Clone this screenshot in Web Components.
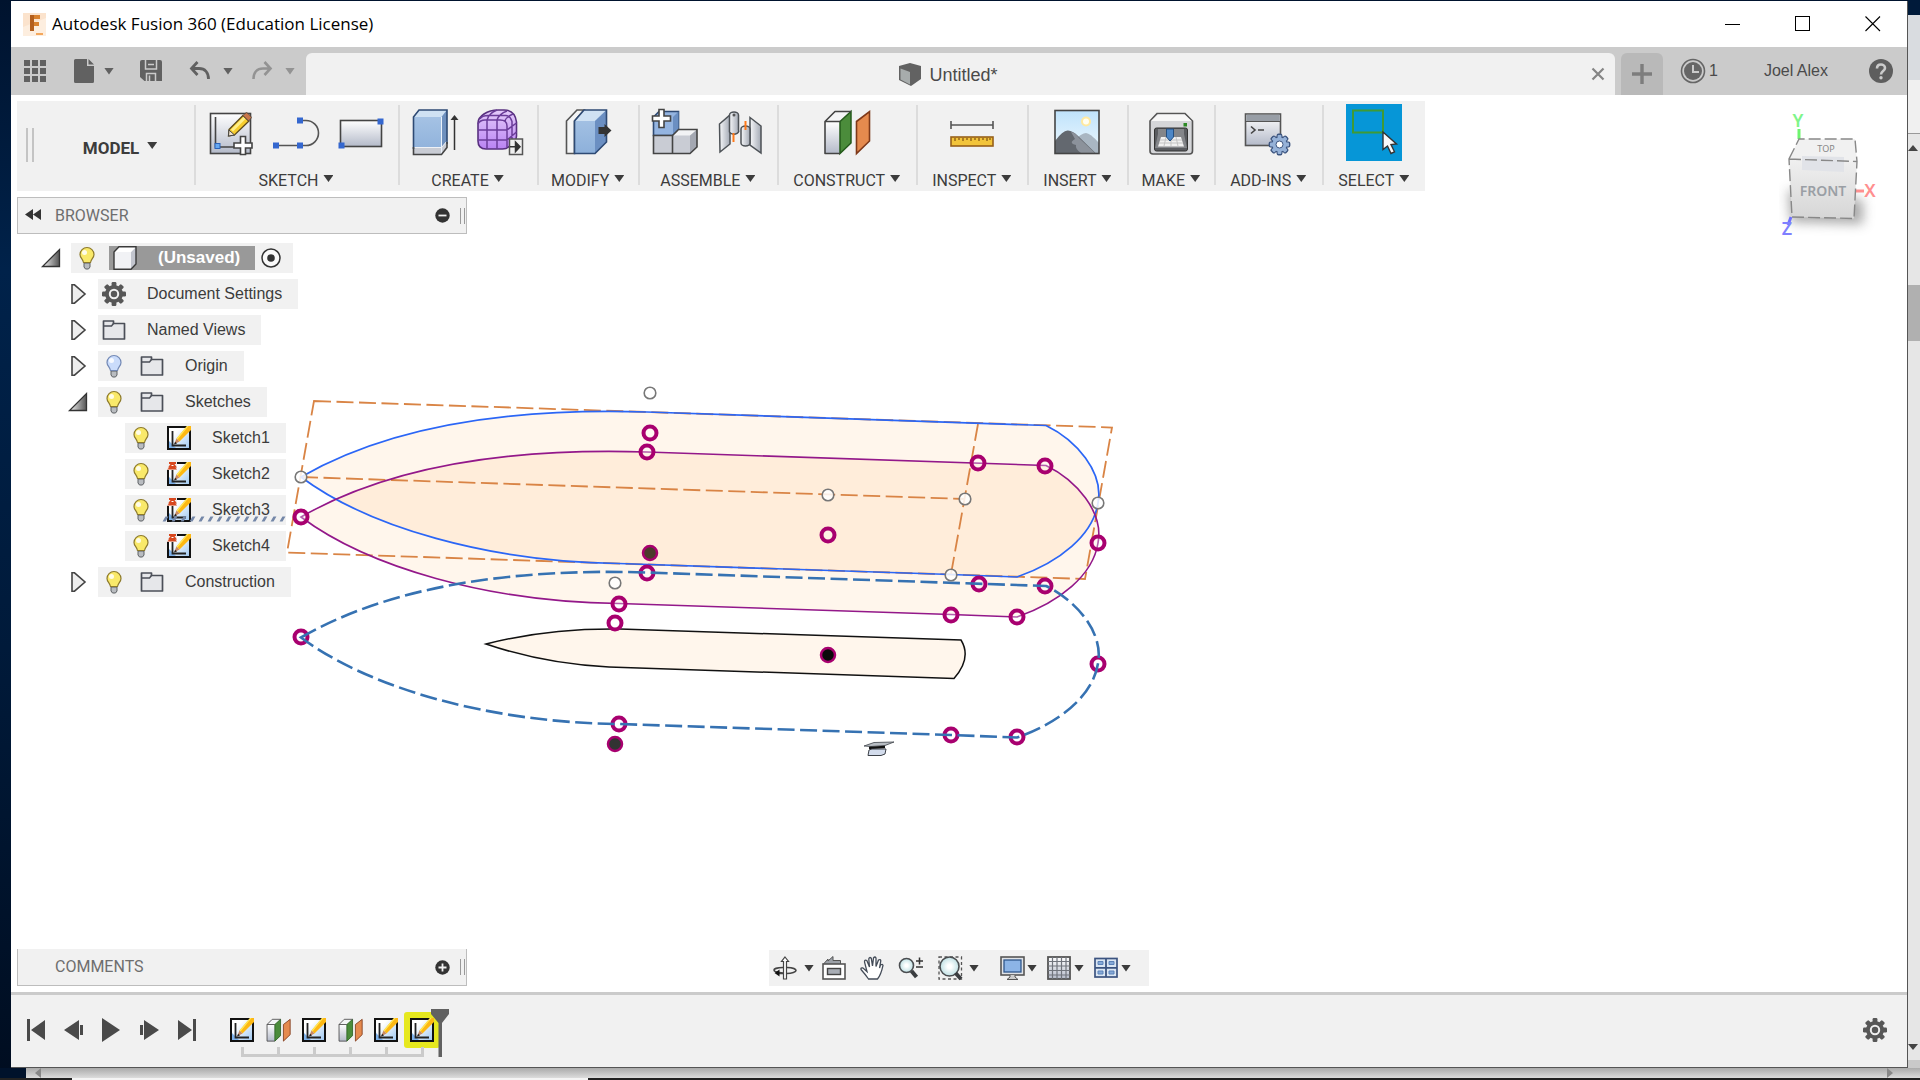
<!DOCTYPE html>
<html lang="en">
<head>
<meta charset="utf-8">
<title>Autodesk Fusion 360 (Education License)</title>
<style>
  html, body {
    margin: 0;
    height: 100%;
  }
  body {
    overflow: hidden;
    color: #3c3c3c;
    font: 16px/20px "Liberation Sans", Arial, sans-serif;
  }
</style>
</head>
<body>
<fusion-app></fusion-app>

<script>
// shared by every shadow root, since outside rules don't reach in
const reset = `
*, *::before, *::after { box-sizing: border-box; }
button {
  all: unset;
  box-sizing: border-box;
  display: inline-flex;
  align-items: center;
  cursor: default;
}
button:focus-visible { outline: 1px dotted #0696d7; }
`;

/**
 * Registers an element from its styles and markup
 * @param {string} name
 * @param {string} style
 * @param {string} markup
 */
function define(name, style, markup) {
  const tmpl = document.createElement("template");
  tmpl.innerHTML = `<style>${reset}${style}</style>${markup}`;
  customElements.define(name, class extends HTMLElement {
    constructor() {
      super();
      this.attachShadow({ mode: "open" }).appendChild(tmpl.content.cloneNode(true));
    }
  });
}

/* ---------- icons ---------- */

const gradients = `
<defs>
  <linearGradient id="paper" x2="0" y2="1"><stop stop-color="#fff"/><stop offset="1" stop-color="#b4bac9"/></linearGradient>
  <linearGradient id="blue" x2="0" y2="1"><stop stop-color="#a9c5e6"/><stop offset="1" stop-color="#8db0da"/></linearGradient>
  <linearGradient id="sky" x2="0" y2="1"><stop stop-color="#bfe2fb"/><stop offset="1" stop-color="#eef9fe"/></linearGradient>
  <linearGradient id="violet" x2="0" y2="1"><stop stop-color="#e4cbfa"/><stop offset="1" stop-color="#b983f3"/></linearGradient>
  <linearGradient id="wash" x2="1" y2="1"><stop offset=".3" stop-color="#fff"/><stop offset="1" stop-color="#9cc7f2"/></linearGradient>
  <linearGradient id="steel"><stop stop-color="#f7f8fa"/><stop offset="1" stop-color="#a3a9b4"/></linearGradient>
  <linearGradient id="dusk"><stop stop-color="#f5f5f5"/><stop offset="1" stop-color="#555"/></linearGradient>
  <radialGradient id="lens"><stop offset=".2" stop-color="#fff"/><stop offset="1" stop-color="#bfe0e4"/></radialGradient>
</defs>`;

function gear(cx, cy, r, fill, extra = "") {
  let teeth = "";
  for (let a = 0; a < 360; a += 45) {
    teeth += `<rect x="${cx - r * 0.2}" y="${cy - r}" width="${r * 0.4}" height="${r * 0.5}" rx="${r * 0.1}" transform="rotate(${a} ${cx} ${cy})"/>`;
  }
  return `<g fill="${fill}" ${extra}>${teeth}<circle cx="${cx}" cy="${cy}" r="${r * 0.75}"/></g>`;
}

const plus = (x, y) => `<path d="M${x - 2.5} ${y - 9}h5v6.5h6.5v5h-6.5v6.5h-5v-6.5h-6.5v-5h6.5z" fill="#fff" stroke="#444" stroke-width="1.6"/>`;
const dot = (x, y) => `<rect x="${x - 3}" y="${y - 3}" width="6" height="6" fill="#3467cf"/>`;
const bulb = (glass, rim) => `
  <path d="M9 17h6v4l-1.500 2h-3l-1.500-2z" fill="#b9bcc0" stroke="#5d6064"/>
  <path d="M12 1.500a7 7 0 0 1 7 7c0 3.500-3 4.500-3.500 8h-7c-.5-3.500-3.500-4.500-3.500-8a7 7 0 0 1 7-7z" fill="${glass}" stroke="${rim}" stroke-width="1.200"/>
  <circle cx="9.500" cy="6.500" r="2.500" fill="#fff" opacity=".85"/>`;
const sketch = `
  <rect x="1" y="1" width="22" height="22" fill="url(#wash)"/>
  <path d="M1 23L1 14 10 23z" fill="#7fb2ea"/><rect x="1" y="1" width="22" height="22" fill="none" stroke="#111" stroke-width="2"/>
  <path d="M5.500 5v14.500H19" fill="none" stroke="#222" stroke-width="1.800"/>
  <path d="M9.500 12.500L20 0h4v4L12.500 15.500z" fill="#fdb813"/><path d="M20 0l1.500 0L10.500 13.500 9.500 12.500z" fill="#ffe85a"/>
  <path d="M9.500 12.500l3 3-5.500 3z" fill="#c98a62"/><path d="M7 18.500l1.200-2.700 1.800 1.600z" fill="#222"/>`;
const planes = `
  <path d="M2 12.500L12 2.500H28L17 12.500z" fill="#f4f5f6"/><path d="M2 12.500h15v32H2z" fill="url(#paper)"/>
  <path d="M17 12.500L28 2.500V34L17 44.500z" fill="#4b8c3b" stroke="#245a1b" stroke-width="1.500"/>
  <path d="M17 44.500H2v-32L12 2.500H28M2 12.500H17" fill="none" stroke="#444" stroke-width="1.600" stroke-linejoin="round"/>
  <path d="M33.500 12.500L46.500 2.500V32L33.500 44.500z" fill="#e58a4e" stroke="#7e391a" stroke-width="1.600"/>`;

// name: [width, height, shapes]
const icons = {
  logo: [23, 23, `<rect width="23" height="23" fill="#fbe3cd"/><path d="M0 14L23 5v18H0z" fill="#fdeedf"/>
    <path d="M7 18V2h10v4h-6v3h5v4h-5v5z" fill="#d9822f"/><path d="M7 2h4v16H7z" fill="#b45f1d"/><path d="M13 20h7v2h-7z" fill="#f3a75c"/>`],
  minimize: [16, 16, `<path d="M0 8.500h15" stroke="#000"/>`],
  maximize: [16, 16, `<rect x=".5" y=".5" width="14" height="14" fill="none" stroke="#000"/>`],
  close: [16, 16, `<path d="M.5 .5l14.500 14.500M15 .5L.5 15" stroke="#000" stroke-width="1.100"/>`],
  apps: [24, 24, `<path fill="#616161" d="M1 1h6v6H1zM9 1h6v6H9zM17 1h6v6h-6zM1 9h6v6H1zM9 9h6v6H9zM17 9h6v6h-6zM1 17h6v6H1zM9 17h6v6H9zM17 17h6v6h-6z"/>`],
  file: [24, 24, `<path fill="#616161" d="M3.500 0H15v7h7v15.500a1.500 1.500 0 0 1-1.500 1.500h-17A1.500 1.500 0 0 1 2 22.500v-21A1.500 1.500 0 0 1 3.500 0zM16.500 0L22 5.500h-5.500z"/>`],
  save: [24, 24, `<path fill="#616161" d="M3 1h18a2 2 0 0 1 2 2v19H5.500L1 18V3a2 2 0 0 1 2-2z"/><path d="M6.500 1v9h11V1M7.500 22v-7.500h9V22" fill="none" stroke="#cbcbcb" stroke-width="1.500"/><path d="M10.500 16.500v5.500M9 5.500h6" stroke="#cbcbcb" stroke-width="1.500"/>`],
  undo: [24, 24, `<path d="M9.500 3L3.500 9.500l6 6.500M4 9.500h7c6 0 9.500 4 9.500 10.500" fill="none" stroke="#616161" stroke-width="2.800"/>`],
  redo: [24, 24, `<path d="M14.500 3l6 6.500-6 6.500M20 9.500h-7c-6 0-9.500 4-9.500 10.500" fill="none" stroke="#939393" stroke-width="2.600"/>`],
  cube: [24, 24, `<path d="M1 3L12 0l11 3v13L13 23 1 17z" fill="#626262"/><path d="M2.500 5.500L12 9v12.500L2.500 16.500z" fill="#a7acac"/>`],
  tabclose: [14, 14, `<path d="M1.500 1.500l11 11M12.500 1.500l-11 11" stroke="#858585" stroke-width="2.200"/>`],
  add: [20, 20, `<path d="M10 0v20M0 10h20" stroke="#7d7d7d" stroke-width="3.400"/>`],
  clock: [26, 26, `<circle cx="13" cy="13" r="11.500" fill="none" stroke="#666" stroke-width="1.600"/><circle cx="13" cy="13" r="9" fill="#666"/><path d="M13 7v7h6" fill="none" stroke="#cbcbcb" stroke-width="2"/>`],
  help: [24, 24, `<circle cx="12" cy="12" r="12" fill="#5e5e5e"/><path d="M8 9.500c0-5.500 8-5 8-.5 0 3-4 3-4 6.500" fill="none" stroke="#cbcbcb" stroke-width="2.600"/><circle cx="12" cy="18.800" r="1.700" fill="#cbcbcb"/>`],

  "new-sketch": [48, 48, `<rect x="3.500" y="4.500" width="40" height="40" fill="url(#paper)" stroke="#444" stroke-width="1.600"/><path d="M8.500 8v30H32" fill="none" stroke="#444" stroke-width="1.600"/>
    <rect x="8" y="34.500" width="5" height="5" fill="#66a8f0" stroke="#2a62b8"/>
    <path d="M22 20.500L36 6.500l6 5.500L27.500 26l-6 1z" fill="#f6cd2e" stroke="#5b4a1e" stroke-width="1.300"/><path d="M24 20.500L36.500 8l2 2L26 22.500z" fill="#fff08a"/>
    <path d="M36 6.500l2-2a2 2 0 0 1 3 0l2.500 2.500a2 2 0 0 1 0 3l-2 2z" fill="#c9764a" stroke="#5b4a3e"/><path d="M21.500 27l.5-6 5.500 5z" fill="#f3e3c8" stroke="#444"/>${plus(36, 36.5)}`],
  line: [48, 48, `<path d="M4 36.500H34a12.500 12.500 0 0 0 0-25H28" fill="none" stroke="#555" stroke-width="1.600"/>${dot(4, 36.5)}${dot(28, 36.5)}${dot(28, 11.5)}`],
  rect: [48, 48, `<rect x="3.500" y="11.500" width="41" height="26" fill="url(#paper)" stroke="#444" stroke-width="1.600"/>${dot(43.5, 12.5)}${dot(4.5, 36.5)}`],
  extrude: [48, 48, `<path d="M2.500 8L8 1H36V38L30.500 45.500h-28z" fill="url(#blue)"/><path d="M2.500 8L8 1H36L30.500 8z" fill="#cfe1f3"/><path d="M30.500 8L36 1V33l-5.500 6z" fill="#6e90be"/>
    <path d="M2.500 38.500h28L36 32v6.500l-5.500 7h-28z" fill="#c9ccd4"/><path d="M2.500 38.500h28L36 32" fill="none" stroke="#eef1f6"/><path d="M30.500 8v37" stroke="#eaf1fa"/>
    <path d="M2.500 40V8L8 1H36V35" fill="none" stroke="#2e4a74" stroke-width="1.600"/><path d="M2.500 38v7.500h28L36 38.500V33" fill="none" stroke="#444" stroke-width="1.600"/>
    <path d="M43.500 41V9" stroke="#333" stroke-width="1.500"/><path d="M39.500 11l4-5 4 5z" fill="#333"/>`],
  form: [48, 48, `<path d="M2 14Q2 9 8 5 14 1 22 1h6q11 0 12.500 12V27q0 6-8 11-2 2-6 2H10q-8 0-8-8z" fill="url(#violet)" stroke="#58307f" stroke-width="1.600"/>
    <path d="M2 15Q4 11 9 11H24q7 0 7 6V38M2 21H31L40.500 14M2 31H31L40.500 23M11 11V40M21 11V40M4 10Q6 6.500 12 6.500H30q4 0 6 6V34M11 11Q13 4 21 1M21 11Q23 5 31 2M29 12Q30 8 37 5" fill="none" stroke="#6b3d99" stroke-width="1.500"/>
    <rect x="33.500" y="30" width="13" height="15.500" fill="#f0f0f0" stroke="#555" stroke-width="1.500"/><path d="M34 37.700h5M39.500 33l4.500 4.700-4.500 4.800z" fill="#333" stroke="#333" stroke-width="1.500"/>`],
  modify: [48, 48, `<path d="M2.500 12L13 1h7L10.500 12v32.500h-8z" fill="#f4f5f6" stroke="#555" stroke-width="1.600"/><path d="M10.500 12L20 1H42.500V33L31 44.500H10.500z" fill="url(#blue)"/>
    <path d="M10.500 12L20 1H42.500L31 12z" fill="#cfe1f3"/><path d="M31 12L42.500 1V33L31 44.500z" fill="#6b8fc2"/><path d="M10.500 12L20 1H42.500V33L31 44.500H10.500z" fill="none" stroke="#2e4a74" stroke-width="1.600"/>
    <path d="M34.500 18h6v-3l7 6.500-7 6.500v-3h-6z" fill="#333"/>`],
  component: [48, 48, `<path d="M2.500 8L8 2.500H27.500V21l-6 5.500h-19z" fill="#94b4e0" stroke="#2e4a74" stroke-width="1.600"/><path d="M22 8L27.500 2.500V21L22 26z" fill="#6b8fc2"/>
    <path d="M2.500 26.500h19v18h-19z" fill="#c9ccd4"/><path d="M21.500 26.500L27.500 20.500H46L39 26.500z" fill="#f2f3f5"/><path d="M21.500 26.500H39v18H21.500z" fill="#c9ccd4"/><path d="M39 26.500L46 20.500V38l-7 6.500z" fill="#a4a8b2"/>
    <path d="M2.500 26.500h19v18h-19zM21.500 26.500L27.500 20.500H46V38l-7 6.500H21.500z" fill="none" stroke="#444" stroke-width="1.600"/>${plus(10.5, 9.5)}`],
  joint: [48, 48, `<path d="M3.500 15L14 6v29L4 43z" fill="url(#steel)" stroke="#4d5257" stroke-width="1.500"/><path d="M13.500 6a4.500 3 0 0 1 9 0V21a4.500 3 0 0 1-9 2z" fill="url(#steel)" stroke="#4d5257" stroke-width="1.500"/><circle cx="18" cy="6" r="1.500" fill="#555"/>
    <path d="M34 8.500L45 17v27L34 36z" fill="url(#steel)" stroke="#4d5257" stroke-width="1.500"/><path d="M25 20a4.500 3 0 0 1 9 0V34a4.500 3 0 0 1-9 0z" fill="url(#steel)" stroke="#4d5257" stroke-width="1.500"/>
    <path d="M17.500 24v9M29.500 12v9" stroke="#ff7a1a" stroke-width="2"/>`],
  construct: [48, 48, planes],
  inspect: [48, 48, `<path d="M3 16H45M3 12v8M45 12v8" stroke="#555" stroke-width="1.600"/><rect x="3" y="28" width="42" height="9" fill="#f2c43a" stroke="#96601a" stroke-width="1.600"/>
    <path d="M7 29v3M11 29v2M15 29v3M19 29v2M23 29v3M27 29v2M31 29v3M35 29v2M39 29v3M42 29v2" stroke="#7d4f12" stroke-width="1.200"/>`],
  insert: [48, 48, `<rect x="2" y="1.500" width="44" height="43" fill="url(#sky)"/><circle cx="33" cy="12.500" r="5" fill="#ffe9a0"/><circle cx="33" cy="12.500" r="3" fill="#fffef2"/>
    <path d="M20 32Q29 24 33 24t13 10v10H20z" fill="#a9b6c2"/><path d="M2 32Q10 21 15 21.500T24 26L43 44.500H2z" fill="#63686f"/><path d="M18 23q4 0 8 6L42 44H28q-6-4-5-8-8-2-1-6z" fill="#8c929b"/>
    <rect x="2" y="1.500" width="44" height="43" fill="none" stroke="#444" stroke-width="1.600"/>`],
  make: [48, 48, `<path d="M3 12L10 4.500H38L45.500 12V42a3 3 0 0 1-3 3H6a3 3 0 0 1-3-3z" fill="#d5d6d9" stroke="#555" stroke-width="1.600"/><path d="M4 12l7-6.500H37.500L44.500 12z" fill="#f7f7f7"/>
    <rect x="36.500" y="14" width="3.500" height="3.500" fill="#2c8a24"/><rect x="7.500" y="19" width="33" height="23" rx="2" fill="#5a5c60" stroke="#333"/><path d="M11 20h26v5l3 14H8l3-14z" fill="#84868a"/><path d="M14 28H34l3 9.500H11z" fill="#f1f1f1"/><path d="M13 31H35M12 34H36M19 28l-2 9M24 28v9M29 28l2 9" stroke="#c3c3c3"/>
    <path d="M19.500 20h7v8l-3.500 4-3.500-4z" fill="#4c86c6" stroke="#244f80"/>`],
  addins: [48, 48, `<rect x="1.500" y="5" width="35" height="31.500" fill="url(#paper)" stroke="#555" stroke-width="1.600"/><path d="M2.300 5.800H35.700V12H2.300z" fill="#989ea6"/><path d="M1.500 12.500h35" stroke="#555"/><path d="M7 17.500l4 3.500-4 3.500M14 21h6" fill="none" stroke="#444" stroke-width="1.600"/>
    ${gear(35.5, 35.5, 10, "#96b2d8", 'stroke="#3e5680" stroke-width="1.800"')}${gear(35.5, 35.5, 9.5, "#96b2d8")}<circle cx="35.500" cy="35.500" r="3.500" fill="#fff" stroke="#3e5680"/>`],
  select: [48, 48, `<rect x="3" y="1.500" width="30" height="22" fill="none" stroke="#3f9a35" stroke-width="2"/><path d="M33 23l0 17.500 4.500-3.500 3.500 7.500 3.500-1.700-3.500-7.300 5.500-.5z" fill="#fafafa" stroke="#333" stroke-width="1.400"/>`],

  rewind: [16, 12, `<path d="M8 0v11L0 5.500zM16 0v11L8 5.500z" fill="#333"/>`],
  minus: [15, 15, `<circle cx="7.500" cy="7.500" r="7.200" fill="#333"/><path d="M3.500 7.500h8" stroke="#f0f0f0" stroke-width="1.800"/>`],
  plus: [15, 15, `<circle cx="7.500" cy="7.500" r="7.200" fill="#333"/><path d="M3.500 7.500h8M7.500 3.500v8" stroke="#f0f0f0" stroke-width="1.800"/>`],
  open: [20, 20, `<path d="M1.500 18.500h17V1.500z" fill="url(#dusk)" stroke="#333" stroke-width="1.300"/>`],
  shut: [20, 20, `<path d="M4 .8h2.500L17 10 6.500 19.200H4z" fill="#eee" stroke="#444" stroke-width="1.600"/>`],
  bulb: [24, 24, bulb("#f9e96a", "#8d7a2c")],
  "bulb-off": [24, 24, bulb("#cadcfb", "#7389b5")],
  body: [24, 24, `<path d="M1 6L6 .8H23V18l-5 5.200H1z" fill="#f1f2f5"/><path d="M18 6L23 1V18l-5 5z" fill="#c2c5ce"/><path d="M1 6L6 .8H23L18 6z" fill="#fff"/><path d="M1 6L6 .8H23V18l-5 5.200H1z" fill="none" stroke="#3a3a3a" stroke-width="1.400"/>`],
  folder: [24, 24, `<path d="M1.500 3h10v2.500h11V21h-21z" fill="#e6e7ea" stroke="#4b4f58" stroke-width="1.700" stroke-linejoin="round"/><path d="M1.500 8H9.500l2-2.500" fill="none" stroke="#4b4f58" stroke-width="1.500"/>`],
  target: [20, 20, `<circle cx="10" cy="10" r="9" fill="#fafafa" stroke="#333" stroke-width="1.500"/><circle cx="10" cy="10" r="3.800" fill="#333"/>`],
  gear: [24, 24, `${gear(12, 12, 12, "#575757")}<circle cx="12" cy="12" r="4.200" fill="none" stroke="#f0f0f0" stroke-width="2"/>`],
  sketch: [24, 24, sketch],
  "sketch-pin": [24, 24, `${sketch}<path d="M0 0h10v8H0z" fill="#f0f0f0"/><path d="M2 0h7v2H7.500l2.500 3.500H1L3.500 2H2zM0 7.500L3 5h5l2 2.500z" fill="#d8481f"/><path d="M4.500 3.500h2" stroke="#fff"/>`],
  planes: [24, 24, `<g transform="scale(.52)">${planes}</g>`],

  orbit: [24, 24, `<path d="M14 11.500c5.500 0 9 1.500 9 3s-4 3-9 3H5M10 17C3 16.500 1 15 1 14s3-2.500 9-2.500" fill="none" stroke="#444" stroke-width="1.600"/><path d="M6.500 13.500v7L1.500 17z" fill="#111"/><path d="M12 1l3.500 4.500h-2V23h-3V5.500h-2z" fill="#fff" stroke="#444" stroke-width="1.200"/>`],
  lookat: [24, 24, `<path d="M1.500 8L6 3v2L11 .5V4.500h7.500V8" fill="#9ca1a8" stroke="#555"/><rect x="1" y="8" width="22" height="15" fill="#fff" stroke="#555" stroke-width="1.600"/><rect x="5.500" y="12.500" width="13" height="6" fill="#a8adb5" stroke="#444" stroke-width="1.400"/>`],
  pan: [24, 24, `<path d="M8.500 23Q5 18 1 13.500q-.5-2 2-1.500l4 3.500L4.500 6q0-2.500 2.300-1.500L9.500 11 8.800 3q.7-2.600 2.500-.7L12.500 10l1-8q1.500-2 2.500 0V10.500L18.500 4q2-1.200 2.300.8L19.500 12l1-3q2-1.500 2.500.3C22 14 21 19 17.500 23z" fill="#fff" stroke="#444c58" stroke-width="1.300"/>`],
  zoom: [26, 24, `<circle cx="8.500" cy="9.500" r="7" fill="url(#lens)" stroke="#4a4d50" stroke-width="1.600"/><path d="M13.500 15l5 6" stroke="#3a3d40" stroke-width="4"/><path d="M18 5h7M21.500 1.500v7M18 11h7" stroke="#333" stroke-width="1.500"/>`],
  fit: [24, 24, `<path d="M1 1h22.500v22H1z" fill="none" stroke="#555" stroke-width="1.300" stroke-dasharray="3 2.500"/><circle cx="11.500" cy="10.500" r="9.500" fill="url(#lens)" stroke="#4a4d50" stroke-width="1.600"/><path d="M17.500 17l5.500 6" stroke="#3a3d40" stroke-width="4"/>`],
  display: [24, 24, `<rect x="1" y="1" width="23" height="18" fill="#dfe2e6" stroke="#555" stroke-width="1.600"/><rect x="4" y="4" width="17" height="12" fill="#8cb4e6" stroke="#2f568c" stroke-width="1.300"/><path d="M10 19v2l-3 2.500h11L15 21v-2" fill="#ccc" stroke="#555"/>`],
  grid: [24, 24, `<rect x="1" y="1" width="22" height="22" fill="url(#paper)" stroke="#555" stroke-width="1.800"/><path d="M5.500 1v22M10 1v22M14.500 1v22M19 1v22M1 5.500h22M1 10h22M1 14.500h22M1 19h22" stroke="#70747c" stroke-width="1.200"/>`],
  views: [24, 24, `<rect x="1" y="2.500" width="22" height="18.500" fill="#dbe6f3" stroke="#3c5480" stroke-width="1.700"/><path d="M12 2v19M1 11.800h22" stroke="#3c5480" stroke-width="1.800"/><path d="M4 5.500h5v3H4zM15 5.500h5v3h-5zM4 15h5v3H4zM15 15h5v3h-5z" fill="#86a9d8" stroke="#5d83b8"/>`],

  first: [20, 22, `<path d="M1 0h3v22H1zM19 1v20L5 11z" fill="#4a4a4a"/>`],
  back: [20, 22, `<path d="M15 1v20L0 11zM16 6h3v10h-3z" fill="#4a4a4a"/>`],
  play: [20, 24, `<path d="M0 0l18 12L0 24z" fill="#4a4a4a"/>`],
  forward: [20, 22, `<path d="M4 1v20L19 11zM0 6h3v10H0z" fill="#4a4a4a"/>`],
  last: [20, 22, `<path d="M0 1v20L14 11zM15 0h3v22h-3z" fill="#4a4a4a"/>`],
  marker: [18, 48, `<path d="M0 0h18v5l-7 9v34H7.500V14L0 5z" fill="#616161"/>`],
};

customElements.define("fusion-icon", class extends HTMLElement {
  constructor() {
    super();
    this.attachShadow({ mode: "open" });
  }

  connectedCallback() {
    const [w, h, shapes] = icons[this.getAttribute("name")];
    this.shadowRoot.innerHTML = `
      <style>:host { display: block; flex: none; } svg { display: block; overflow: visible; }</style>
      <svg width="${w}" height="${h}" viewBox="0 0 ${w} ${h}" aria-hidden="true">${gradients}${shapes}</svg>`;
  }
});

define("drop-arrow", `
:host {
  display: block;
  flex: none;
  width: 10px;
  height: 7px;
  background: currentColor;
  clip-path: polygon(0 0, 100% 0, 50% 100%);
}`, ``);

/* ---------- title bar and tabs ---------- */

define("title-bar", `
:host {
  display: flex;
  align-items: center;
  height: 46px;
  padding: 0 26px 0 12px;
  background: #fff;
  color: #000;
}
h1 {
  flex: 1;
  margin: 0 0 0 6px;
  font: 17px/24px "Open Sans", "Noto Sans", sans-serif;
}
div { display: flex; gap: 54px; }
`, `
<fusion-icon name="logo"></fusion-icon>
<h1><slot></slot></h1>
<div>
  <button aria-label="Minimize"><fusion-icon name="minimize"></fusion-icon></button>
  <button aria-label="Maximize"><fusion-icon name="maximize"></fusion-icon></button>
  <button aria-label="Close"><fusion-icon name="close"></fusion-icon></button>
</div>`);

define("quick-bar", `
:host {
  display: flex;
  height: 48px;
  background: #cbcbcb;
  color: #616161;
}
.tools, .account {
  display: flex;
  align-items: center;
}
.tools { gap: 25px; padding: 0 11px 0 12px; }
.tools button { gap: 8px; }
.history { display: flex; gap: 17px; }
.history button { gap: 11px; }
.redo { color: #939393; }
.tab {
  flex: 1;
  display: flex;
  align-items: center;
  margin-top: 6px;
  padding: 0 10px;
  border-radius: 6px 6px 0 0;
  background: #f1f1f1;
  color: #4a4a4a;
}
.name {
  flex: 1;
  display: flex;
  justify-content: center;
  align-items: center;
  gap: 8px;
  padding: 2px 12px 0 0;
  font-size: 18px;
}
.new {
  justify-content: center;
  width: 42px;
  margin: 6px 0 0 6px;
  border-radius: 6px 6px 0 0;
  background: #b9b9b9;
}
.account { padding: 0 14px 0 17px; color: #4a4a4a; }
.jobs { gap: 3px; }
.user { margin: 0 41px 0 46px; }
`, `
<div class="tools">
  <button aria-label="Data panel"><fusion-icon name="apps"></fusion-icon></button>
  <button aria-label="File"><fusion-icon name="file"></fusion-icon><drop-arrow></drop-arrow></button>
  <button aria-label="Save"><fusion-icon name="save"></fusion-icon></button>
  <div class="history">
    <button aria-label="Undo"><fusion-icon name="undo"></fusion-icon><drop-arrow></drop-arrow></button>
    <button class="redo" aria-label="Redo"><fusion-icon name="redo"></fusion-icon><drop-arrow></drop-arrow></button>
  </div>
</div>
<div class="tab">
  <span class="name"><fusion-icon name="cube"></fusion-icon><slot></slot></span>
  <button aria-label="Close tab"><fusion-icon name="tabclose"></fusion-icon></button>
</div>
<button class="new" aria-label="New tab"><fusion-icon name="add"></fusion-icon></button>
<div class="account">
  <button class="jobs"><fusion-icon name="clock"></fusion-icon>1</button>
  <button class="user">Joel Alex</button>
  <button aria-label="Help"><fusion-icon name="help"></fusion-icon></button>
</div>`);

/* ---------- ribbon ---------- */

define("tool-ribbon", `
:host {
  display: flex;
  align-self: flex-start;
  height: 90px;
  background: #f1f1f1;
  font-family: Roboto, sans-serif;
}
.grip {
  width: 8px;
  height: 34px;
  margin: 27px 0 0 9px;
  border: solid #c4c4c4;
  border-width: 0 2px;
}
.workspace {
  justify-content: center;
  gap: 8px;
  width: 160px;
  padding: 3px 0 0 12px;
  font-size: 17px;
  font-weight: 700;
}
.workspace drop-arrow { margin-bottom: 4px; }
`, `
<div class="grip"></div>
<button class="workspace">MODEL <drop-arrow></drop-arrow></button>
<slot></slot>`);

define("tool-group", `
:host {
  display: flex;
  flex-direction: column;
  align-items: center;
  padding-top: 3px;
  background: linear-gradient(#dcdcdc, #dcdcdc) 0 4px / 2px 80px no-repeat;
}
.tools { display: flex; gap: 9px; padding: 0 9px; }
.label {
  gap: 5px;
  margin-top: 9px;
  padding: 0 16px;
}
:host([snug]) .label { padding: 0 14px; }
.label drop-arrow { margin-bottom: 4px; }
`, `
<div class="tools"><slot></slot></div>
<button class="label"><slot name="label"></slot><drop-arrow></drop-arrow></button>`);

customElements.define("tool-button", class extends HTMLElement {
  constructor() {
    super();
    this.attachShadow({ mode: "open" });
  }

  connectedCallback() {
    const icon = this.getAttribute("icon");
    this.shadowRoot.innerHTML = `
      <style>
        ${reset}
        :host { display: block; }
        button { justify-content: center; width: 56px; height: 57px; }
        :host([active]) button { background: #0696d7; }
      </style>
      <button aria-label="${icon}"><fusion-icon name="${icon}"></fusion-icon></button>`;
  }
});

/* ---------- browser ---------- */

define("panel-header", `
:host {
  display: flex;
  align-items: center;
  width: 450px;
  height: 37px;
  padding: 0 1px 0 7px;
  border: 1px solid #bdbdbd;
  background: #f1f1f1;
  color: #6e6e6e;
  font-family: Roboto, sans-serif;
}
:host([docked]) { border-top: 0; }
.lead { width: 30px; }
.title { flex: 1; }
.grip {
  width: 5px;
  height: 16px;
  margin-left: 10px;
  border: solid #999;
  border-width: 0 1px;
}
`, `
<span class="lead"><slot name="lead"></slot></span>
<span class="title"><slot></slot></span>
<slot name="action"></slot>
<span class="grip"></span>`);

define("tree-item", `
:host {
  display: flex;
  align-items: center;
  gap: 10px;
  height: 30px;
  padding-left: calc(24px + 27px * var(--depth, 1));
}
.toggle { width: 20px; height: 20px; }
.row {
  display: flex;
  align-items: center;
  height: 30px;
  padding: 0 16px 0 4px;
  background: #f1f1f1;
}
.label { display: flex; align-items: center; gap: 21px; }
:host([root]) .row { padding-right: 12px; }
:host([root]) .label {
  height: 24px;
  margin-right: 6px;
  padding: 0 15px 0 4px;
  background: #999;
  color: #fff;
  font-size: 17px;
  font-weight: 700;
}
`, `
<span class="toggle"><slot name="toggle"></slot></span>
<div class="row">
  <slot name="light"></slot>
  <span class="label"><slot name="icon"></slot><slot></slot></span>
  <slot name="after"></slot>
</div>`);

customElements.define("model-tree", class extends HTMLElement {
  constructor() {
    super();
    this.attachShadow({ mode: "open" });
  }

  connectedCallback() {
    // [depth, toggle, light, icon, label]
    const rows = [
      [0, "open", "bulb", "body", "(Unsaved)"],
      [1, "shut", "", "gear", "Document Settings"],
      [1, "shut", "", "folder", "Named Views"],
      [1, "shut", "bulb-off", "folder", "Origin"],
      [1, "open", "bulb", "folder", "Sketches"],
      [2, "", "bulb", "sketch", "Sketch1"],
      [2, "", "bulb", "sketch-pin", "Sketch2"],
      [2, "", "bulb", "sketch-pin", "Sketch3"],
      [2, "", "bulb", "sketch-pin", "Sketch4"],
      [1, "shut", "bulb", "folder", "Construction"],
    ];
    // the margins live here: the button reset of this root beats ::slotted()
    this.shadowRoot.innerHTML = `
      <style>
        ${reset}
        :host { display: flex; flex-direction: column; gap: 6px; align-items: flex-start; }
        button[slot="light"] { margin-right: 14px; }
        [root] button[slot="light"] { margin-right: 10px; }
      </style>
      ${rows.map(([depth, toggle, light, icon, label]) => `
        <tree-item style="--depth: ${depth}" ${depth ? "" : "root"}>
          ${toggle && `<button slot="toggle" aria-label="Toggle ${label}"><fusion-icon name="${toggle}"></fusion-icon></button>`}
          ${light && `<button slot="light" aria-label="Show ${label}"><fusion-icon name="${light}"></fusion-icon></button>`}
          <fusion-icon slot="icon" name="${icon}"></fusion-icon>
          ${label}
          ${depth ? "" : `<fusion-icon slot="after" name="target"></fusion-icon>`}
        </tree-item>`).join("")}`;
  }
});

/* ---------- canvas ---------- */

// the same hull outline is drawn three times, each lower than the last
const hull = `M301 477C395 423 520 408 647 412L1046 425.500C1076 440 1104 472 1098 503C1093 535 1060 562 1017 577L951 574.500 619 563.500C488 562 368 527 301 477z`;
const axes = `M314 401L1112 427.500 1085 579 287 552.500zM301 477L965 499M978 424L951 574`;

const handles = [
  [650, 433], [647, 452], [301, 517], [978, 463], [1045, 466], [828, 535], [1098, 543],
  [979, 584], [1045, 586], [951, 615], [1017, 617], [1098, 664], [951, 735], [1017, 737],
  [647, 573], [619, 604], [615, 623], [619, 724], [301, 637],
];
const points = [[650, 393], [301, 477], [828, 495], [965, 499], [1098, 503], [951, 575], [615, 583]];
const centers = [[650, 553, "#4c3a2c"], [615, 744, "#333"], [828, 655, "#0a0a0a"]];

define("sketch-view", `
:host { display: block; pointer-events: none; }
svg { display: block; width: 100%; height: 100%; }
`, `
<svg fill="none">
  <g transform="translate(-11 -95)">
    <g fill="#ffa033" fill-opacity=".095">
      <path d="${hull}"/>
      <path d="${hull}" transform="translate(0 40)"/>
      <path d="M486 644Q548 628 620 629L961 640Q972 658 954 678.500L609 667Q545 664 486 644z" stroke="#111" stroke-width="1.500"/>
    </g>
    <path d="${axes}" stroke="#d98445" stroke-width="1.800" stroke-dasharray="17 5.500"/>
    <path d="${hull}" stroke="#2b66f6" stroke-width="1.700"/>
    <path d="${hull}" transform="translate(0 40)" stroke="#93188a" stroke-width="1.600"/>
    <g stroke="#a8006f" stroke-width="4">
      ${handles.map(([x, y]) => `<circle cx="${x}" cy="${y}" r="6.500" fill="#fff" fill-opacity=".3"/>`).join("")}
      ${centers.map(([x, y, fill]) => `<circle cx="${x}" cy="${y}" r="7" fill="${fill}" stroke-width="2.500"/>`).join("")}
    </g>
    <path d="${hull}" transform="translate(0 160.500)" stroke="#3672b2" stroke-width="2.600" stroke-dasharray="17 5.500"/>
    <g stroke="#777" stroke-width="1.600" fill="#fff" fill-opacity=".85">
      ${points.map(([x, y]) => `<circle cx="${x}" cy="${y}" r="5.800"/>`).join("")}
    </g>
    <path d="M164 519H286" stroke="#7487a8" stroke-width="5" stroke-dasharray="3 6" transform="skewX(-30)" transform-origin="164 519"/>
    <g stroke="#3c4148">
      <path d="M864 746l10-3.500 20-.5-9 3.500-14 1z" fill="#b9bec4" stroke-width=".8"/>
      <path d="M869 748l16-1" stroke="#111" stroke-width="2.500"/>
      <path d="M869 750l3-1h14l-1 5-4 1.500h-13z" fill="#d3dcec"/>
    </g>
  </g>
</svg>`);

define("view-cube", `
:host { display: block; }
svg { display: block; }
text { font-family: "Noto Sans", sans-serif; text-anchor: middle; }
`, `
<svg width="110" height="132" viewBox="1779 107 110 132">
  <defs>
    <linearGradient id="face" x2="0" y2="1"><stop stop-color="#f0f0f0"/><stop offset="1" stop-color="#d6d6d6"/></linearGradient>
    <filter id="soft" x="-40%" y="-60%" width="180%" height="260%"><feGaussianBlur stdDeviation="6"/></filter>
  </defs>
  <path d="M1788 190l75 10 0 24-72-2z" fill="#555" opacity=".5" filter="url(#soft)"/>
  <path d="M1799 129v10" stroke="#6ff56f" stroke-width="3"/>
  <path d="M1791 217l-3 8" stroke="#6f6fff" stroke-width="3"/>
  <path d="M1856 191h8" stroke="#ff8f8f" stroke-width="3"/>
  <path d="M1799 139h56l2 22.500-68-2.500z" fill="#f1f1f1"/>
  <path d="M1789 159l68 2.500-3 57-62-1.500z" fill="url(#face)"/>
  <path d="M1802 156l42 1v15l-42-2z" fill="#e1e3e8"/>
  <path d="M1789 159l10-20h56l2 22.500-3 57-62-1.500z M1789 159l68 2.500" fill="none" stroke="#888" stroke-width="1.400" stroke-dasharray="12 4"/>
  <text x="1798" y="127" font-size="18" font-weight="600" fill="#7ff58a">Y</text>
  <text x="1870" y="197" font-size="18" font-weight="600" fill="#ff8f8f">X</text>
  <text x="1787" y="235" font-size="18" font-weight="600" fill="#7f7fff">Z</text>
  <text x="1826" y="152" font-size="9" fill="#888">TOP</text>
  <text x="1823" y="196" font-size="14" font-weight="600" fill="#9a9fa5">FRONT</text>
</svg>`);

define("nav-bar", `
:host {
  display: flex;
  align-items: center;
  gap: 14px;
  height: 36px;
  padding: 0 18px 0 4px;
  background: #f1f1f1;
}
button { gap: 7px; }
.aim { display: flex; gap: 8px; }
.display { display: flex; gap: 10px; margin-left: 7px; }
.display button { gap: 3px; }
`, `
<div class="aim">
  <button aria-label="Orbit"><fusion-icon name="orbit"></fusion-icon><drop-arrow></drop-arrow></button>
  <button aria-label="Look at"><fusion-icon name="lookat"></fusion-icon></button>
</div>
<button aria-label="Pan"><fusion-icon name="pan"></fusion-icon></button>
<button aria-label="Zoom"><fusion-icon name="zoom"></fusion-icon></button>
<button aria-label="Fit"><fusion-icon name="fit"></fusion-icon><drop-arrow></drop-arrow></button>
<div class="display">
  <button aria-label="Display settings"><fusion-icon name="display"></fusion-icon><drop-arrow></drop-arrow></button>
  <button aria-label="Grid and snaps"><fusion-icon name="grid"></fusion-icon><drop-arrow></drop-arrow></button>
  <button aria-label="Viewports"><fusion-icon name="views"></fusion-icon><drop-arrow></drop-arrow></button>
</div>`);

/* ---------- timeline ---------- */

define("time-line", `
:host {
  display: flex;
  align-items: center;
  height: 75px;
  padding: 0 20px 2px 15px;
  border-top: 3px solid #cbcbcb;
  background: #f1f1f1;
}
.playback { display: flex; align-items: center; gap: 18px; width: 198px; }
.steps { position: relative; display: flex; flex: 1; }
.step {
  display: flex;
  justify-content: center;
  width: 36px;
  height: 36px;
  align-items: center;
}
.step::after {
  content: "";
  position: absolute;
  top: 35px;
  width: 3px;
  height: 9px;
  background: #cbcbcb;
}
.current { border-radius: 3px; background: #e6e81e; }
.rail {
  position: absolute;
  top: 42px;
  left: 17px;
  width: 183px;
  height: 3px;
  background: #cbcbcb;
}
.marker { position: absolute; top: -3px; left: 207px; }
`, `
<div class="playback">
  <button aria-label="Go to start"><fusion-icon name="first"></fusion-icon></button>
  <button aria-label="Step back"><fusion-icon name="back"></fusion-icon></button>
  <button aria-label="Play"><fusion-icon name="play"></fusion-icon></button>
  <button aria-label="Step forward"><fusion-icon name="forward"></fusion-icon></button>
  <button aria-label="Go to end"><fusion-icon name="last"></fusion-icon></button>
</div>
<div class="steps">
  <button class="step" aria-label="Sketch1"><fusion-icon name="sketch"></fusion-icon></button>
  <button class="step" aria-label="Plane1"><fusion-icon name="planes"></fusion-icon></button>
  <button class="step" aria-label="Sketch2"><fusion-icon name="sketch"></fusion-icon></button>
  <button class="step" aria-label="Plane2"><fusion-icon name="planes"></fusion-icon></button>
  <button class="step" aria-label="Sketch3"><fusion-icon name="sketch"></fusion-icon></button>
  <button class="step current" aria-label="Sketch4"><fusion-icon name="sketch"></fusion-icon></button>
  <span class="rail"></span>
  <fusion-icon class="marker" name="marker"></fusion-icon>
</div>
<button aria-label="Timeline settings"><fusion-icon name="gear"></fusion-icon></button>`);

/* ---------- what shows behind the window ---------- */

define("back-scroll", `
:host {
  display: flex;
  flex-direction: column;
  background: #e6e6e6;
}
.sky { height: 15px; background: #001a3a; }
.frame { height: 65px; background: #d9dce0; }
.bar { height: 54px; border-bottom: 1px solid #999; background: #f0f0f0; }
.up, .down {
  width: 10px;
  height: 6px;
  background: #444;
}
.up { margin-top: 11px; clip-path: polygon(0 100%, 100% 100%, 50% 0); }
.down { margin: auto 0 10px; clip-path: polygon(0 0, 100% 0, 50% 100%); }
.thumb { height: 56px; margin-top: 134px; background: #b0b0b0; }
.foot { height: 8px; background: #c9c9c9; }
`, `
<div class="sky"></div><div class="frame"></div><div class="bar"></div>
<div class="up"></div><div class="thumb"></div><div class="down"></div><div class="foot"></div>`);

define("back-floor", `
:host {
  display: grid;
  grid-template: 10px 2px / 26px 46px 516px 1fr;
}
.night { background: #00122b; }
.track {
  grid-column: 2 / -1;
  display: flex;
  justify-content: space-between;
  align-items: center;
  padding: 0 27px 0 9px;
  background: linear-gradient(#aaa, #dcdcdc);
}
.track span { width: 6px; height: 10px; background: #888; clip-path: polygon(100% 0, 100% 100%, 0 50%); }
.track .next { clip-path: polygon(0 0, 0 100%, 100% 50%); }
.dark { background: #222; }
.start { grid-column: 1 / 3; }
.light { background: #f4f4f4; }
`, `
<div class="night"></div>
<div class="track"><span></span><span class="next"></span></div>
<div class="dark start"></div><div class="light"></div><div class="dark"></div>`);

/* ---------- app ---------- */

define("fusion-app", `
:host {
  display: grid;
  grid-template: 1px 1fr 12px / 11px 1fr 12px;
  height: 100vh;
  background: linear-gradient(#00132e, #00224a 25%, #001a3a 60%, #000d20);
}
.window {
  grid-area: 2 / 2;
  display: flex;
  flex-direction: column;
  border: solid #555;
  border-width: 0 1px 1px 0;
  background: #fff;
}
back-scroll { grid-area: 1 / 3 / 3; }
back-floor { grid-area: 3 / 1 / 4 / 4; }
main {
  position: relative;
  flex: 1;
  display: flex;
  flex-direction: column;
  gap: 6px;
  padding: 6px 6px 6px;
}
model-tree { flex: 1; margin-top: 3px; }
.dock {
  display: grid;
  grid-template-columns: 1fr auto 1fr;
  align-items: end;
}
sketch-view { position: absolute; inset: 0; }
view-cube { position: absolute; top: 12px; right: 18px; }
`, `
<div class="window">
  <title-bar>Autodesk Fusion 360 (Education License)</title-bar>
  <quick-bar>Untitled*</quick-bar>
  <main>
    <tool-ribbon>
      <tool-group>
        <span slot="label">SKETCH</span>
        <tool-button icon="new-sketch"></tool-button>
        <tool-button icon="line"></tool-button>
        <tool-button icon="rect"></tool-button>
      </tool-group>
      <tool-group>
        <span slot="label">CREATE</span>
        <tool-button icon="extrude"></tool-button>
        <tool-button icon="form"></tool-button>
      </tool-group>
      <tool-group snug>
        <span slot="label">MODIFY</span>
        <tool-button icon="modify"></tool-button>
      </tool-group>
      <tool-group>
        <span slot="label">ASSEMBLE</span>
        <tool-button icon="component"></tool-button>
        <tool-button icon="joint"></tool-button>
      </tool-group>
      <tool-group>
        <span slot="label">CONSTRUCT</span>
        <tool-button icon="construct"></tool-button>
      </tool-group>
      <tool-group>
        <span slot="label">INSPECT</span>
        <tool-button icon="inspect"></tool-button>
      </tool-group>
      <tool-group>
        <span slot="label">INSERT</span>
        <tool-button icon="insert"></tool-button>
      </tool-group>
      <tool-group snug>
        <span slot="label">MAKE</span>
        <tool-button icon="make"></tool-button>
      </tool-group>
      <tool-group>
        <span slot="label">ADD-INS</span>
        <tool-button icon="addins"></tool-button>
      </tool-group>
      <tool-group>
        <span slot="label">SELECT</span>
        <tool-button icon="select" active></tool-button>
      </tool-group>
    </tool-ribbon>
    <panel-header>
      <button slot="lead" aria-label="Collapse"><fusion-icon name="rewind"></fusion-icon></button>
      BROWSER
      <button slot="action" aria-label="Hide browser"><fusion-icon name="minus"></fusion-icon></button>
    </panel-header>
    <model-tree></model-tree>
    <div class="dock">
      <panel-header docked>
        COMMENTS
        <button slot="action" aria-label="Add comment"><fusion-icon name="plus"></fusion-icon></button>
      </panel-header>
      <nav-bar></nav-bar>
    </div>
    <sketch-view></sketch-view>
    <view-cube></view-cube>
  </main>
  <time-line></time-line>
</div>
<back-scroll></back-scroll>
<back-floor></back-floor>`);
</script>
</body>
</html>
